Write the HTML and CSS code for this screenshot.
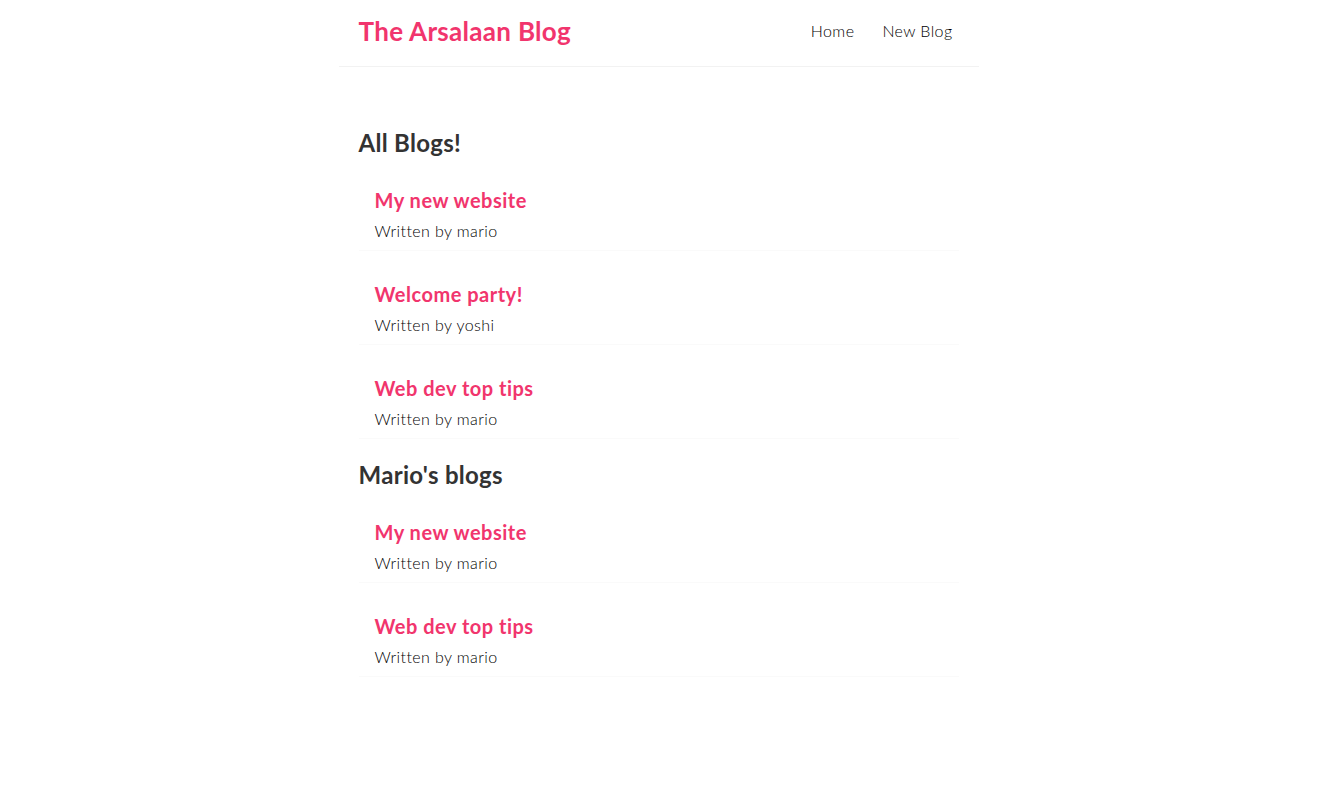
FILE: index.html
```html
<!DOCTYPE html>
<html lang="en">
<head>
<meta charset="utf-8">
<title>The Arsalaan Blog</title>
<link rel="stylesheet" href="styles.css">
</head>
<body>
<div class="app">
  <nav class="navbar">
    <h1 class="brand">The Arsalaan Blog</h1>
    <div class="links">
      <a href="#" class="nav-link">Home</a>
      <a href="#" class="nav-link">New Blog</a>
    </div>
  </nav>
  <div class="content">
    <div class="blog-list">
      <h2 class="list-title">All Blogs!</h2>
      <div class="blog-preview">
        <h2 class="blog-title">My new website</h2>
        <p class="blog-author">Written by mario</p>
      </div>
      <div class="blog-preview">
        <h2 class="blog-title">Welcome party!</h2>
        <p class="blog-author">Written by yoshi</p>
      </div>
      <div class="blog-preview">
        <h2 class="blog-title">Web dev top tips</h2>
        <p class="blog-author">Written by mario</p>
      </div>
    </div>
    <div class="blog-list">
      <h2 class="list-title">Mario's blogs</h2>
      <div class="blog-preview">
        <h2 class="blog-title">My new website</h2>
        <p class="blog-author">Written by mario</p>
      </div>
      <div class="blog-preview">
        <h2 class="blog-title">Web dev top tips</h2>
        <p class="blog-author">Written by mario</p>
      </div>
    </div>
  </div>
</div>
</body>
</html>
```

FILE: styles.css
```css
* {
  margin: 0;
  box-sizing: content-box;
  font-family: "Lato", "Noto Sans", sans-serif;
  color: #333;
}
body {
  background: #fff;
}
.navbar {
  padding: 18px 20px 22px;
  display: flex;
  align-items: center;
  max-width: 600px;
  margin: 0 auto;
  height: 26px;
  border-bottom: 1px solid #f2f2f2;
}
.brand {
  color: #f1356d;
  font-size: 26px;
  font-weight: 700;
  line-height: 26px;
  letter-spacing: 0.3px;
}
.links {
  margin-left: auto;
  display: flex;
}
.nav-link {
  margin-left: 16px;
  padding: 6px;
  text-decoration: none;
  font-size: 16px;
  font-weight: 300;
  line-height: 20px;
  letter-spacing: 0.4px;
  color: #000;
}
.content {
  max-width: 600px;
  margin: 40px auto;
  padding: 20px;
}
.list-title {
  font-size: 24px;
  font-weight: 700;
  line-height: 30px;
  padding-top: 1px;
  margin-bottom: -1px;
  letter-spacing: 0.3px;
}
.blog-preview {
  padding: 10px 16px 9px;
  margin: 20px 0;
  border-bottom: 1px solid #fafafa;
}
.blog-title {
  font-size: 20px;
  font-weight: 700;
  line-height: 25px;
  color: #f1356d;
  padding-top: 1px;
  margin-bottom: 8px;
  letter-spacing: 0.5px;
}
.blog-author {
  font-size: 16px;
  font-weight: 300;
  line-height: 20px;
  letter-spacing: 0.4px;
  color: #000;
}
```
